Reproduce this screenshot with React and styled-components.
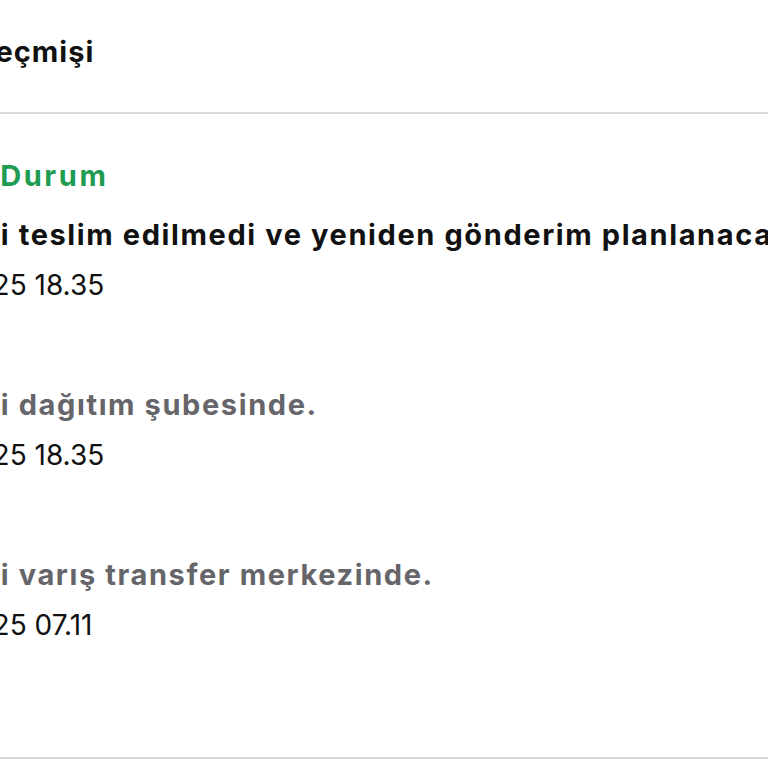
import React from 'react';
import styled, { createGlobalStyle } from 'styled-components';

const GlobalStyle = createGlobalStyle`
  html, body {
    margin: 0;
    padding: 0;
    background: #ffffff;
    overflow: hidden;
  }
  body {
    font-family: Inter, "Noto Sans", "Liberation Sans", sans-serif;
    -webkit-font-smoothing: antialiased;
  }
`;

const Page = styled.div`
  width: 768px;
  height: 768px;
  overflow: hidden;
  background: #fff;
`;

const Header = styled.header`
  padding: 35px 0 43px 0;
  border-bottom: 2px solid #dadada;
`;

// the screenshot is cropped on the left, so every line is pulled out of view a bit
const Title = styled.h1`
  margin: 0 0 0 -125px;
  white-space: nowrap;
  font-size: 29px;
  line-height: 34px;
  font-weight: 700;
  letter-spacing: 1px;
  color: #111;
`;

const History = styled.section`
  padding: 45px 0 115px 0;
  border-bottom: 2px solid #dadada;
`;

const StatusLabel = styled.div`
  margin: 0 0 25px -125px;
  white-space: nowrap;
  font-size: 29px;
  line-height: 34px;
  font-weight: 700;
  letter-spacing: 2.6px;
  color: #1f9b52;
`;

const EventList = styled.ul`
  list-style: none;
  margin: 0;
  padding: 0;
  display: flex;
  flex-direction: column;
  gap: 86px;
`;

const Event = styled.li`
  display: flex;
  flex-direction: column;
  gap: 16px;
`;

const EventText = styled.div`
  margin-left: -114px;
  white-space: nowrap;
  font-size: 29px;
  line-height: 34px;
  font-weight: 700;
  letter-spacing: 1.6px;
  color: ${({ $current }) => ($current ? '#111' : '#65656a')};
`;

const EventDate = styled.div`
  margin-left: -120px;
  white-space: nowrap;
  font-size: 28px;
  line-height: 34px;
  font-weight: 400;
  color: #111;
`;

const events = [
  { text: 'Gönderi teslim edilmedi ve yeniden gönderim planlanacak.', date: '12.05.2025 18.35', current: true },
  { text: 'Gönderi dağıtım şubesinde.', date: '12.05.2025 18.35' },
  { text: 'Gönderi varış transfer merkezinde.', date: '12.05.2025 07.11' },
];

export default function App() {
  return (
    <Page>
      <GlobalStyle />
      <Header>
        <Title>Kargo Geçmişi</Title>
      </Header>
      <History>
        <StatusLabel>Güncel Durum</StatusLabel>
        <EventList>
          {events.map((e, i) => (
            <Event key={i}>
              <EventText $current={e.current}>{e.text}</EventText>
              <EventDate>{e.date}</EventDate>
            </Event>
          ))}
        </EventList>
      </History>
    </Page>
  );
}
